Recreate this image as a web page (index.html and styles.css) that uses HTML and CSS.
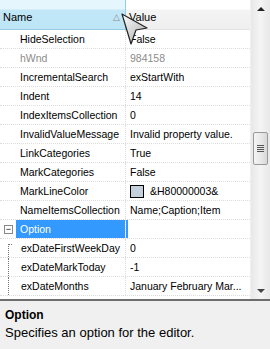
FILE: index.html
```html
<!DOCTYPE html>
<html>
  <head>
    <title>Properties</title>
    <link rel="stylesheet" href="styles.css">
  </head>
  <body>
    <div class="grid">
      <div class="main">
        <div class="list">
          <div class="header">
            <div class="head-name">Name<span class="sort">&#9651;</span></div>
            <div class="head-value">Value</div>
          </div>
          <div class="row"><div class="name">HideSelection</div><div class="value">False</div></div>
          <div class="row disabled"><div class="name">hWnd</div><div class="value">984158</div></div>
          <div class="row"><div class="name">IncrementalSearch</div><div class="value">exStartWith</div></div>
          <div class="row"><div class="name">Indent</div><div class="value">14</div></div>
          <div class="row"><div class="name">IndexItemsCollection</div><div class="value">0</div></div>
          <div class="row"><div class="name">InvalidValueMessage</div><div class="value">Invalid property value.</div></div>
          <div class="row"><div class="name">LinkCategories</div><div class="value">True</div></div>
          <div class="row"><div class="name">MarkCategories</div><div class="value">False</div></div>
          <div class="row"><div class="name">MarkLineColor</div><div class="value"><span class="swatch"></span>&amp;H80000003&amp;</div></div>
          <div class="row"><div class="name">NameItemsCollection</div><div class="value">Name;Caption;Item</div></div>
          <div class="row selected">
            <div class="name"><span class="expander">&minus;</span><span class="label">Option</span></div>
            <div class="value"></div>
          </div>
          <div class="row child first"><div class="name"><span class="tree"></span>exDateFirstWeekDay</div><div class="value">0</div></div>
          <div class="row child"><div class="name"><span class="tree"></span>exDateMarkToday</div><div class="value">-1</div></div>
          <div class="row child"><div class="name"><span class="tree"></span>exDateMonths</div><div class="value">January February Mar...</div></div>
        </div>
        <div class="scrollbar">
          <div class="arrow up"></div>
          <div class="track">
            <div class="thumb"><span class="grip"></span></div>
          </div>
          <div class="arrow down"></div>
        </div>
      </div>
      <div class="desc">
        <div class="desc-title">Option</div>
        <div class="desc-text">Specifies an option for the editor.</div>
      </div>
      <svg class="cursor" width="30" height="34" viewBox="0 0 30 34">
        <defs>
          <linearGradient id="cg" x1="0" y1="0" x2="1" y2="1">
            <stop offset="0" stop-color="#ffffff"/>
            <stop offset="1" stop-color="#a8a8a8"/>
          </linearGradient>
        </defs>
        <polygon points="1,1 26,15 15,17 10,31" fill="url(#cg)" stroke="#222" stroke-width="1.2" stroke-linejoin="round"/>
      </svg>
    </div>
  </body>
</html>
```

FILE: styles.css
```css
body {
  margin: 0;
  font-family: "Liberation Sans", Arial, sans-serif;
  font-size: 10.5px;
  color: #000;
  background: #fff;
}
.grid {
  position: relative;
  width: 270px;
  height: 349px;
  display: flex;
  flex-direction: column;
  overflow: hidden;
}
.main {
  display: flex;
  height: 299px;
  border-bottom: 2px solid #6d6d6d;
}
.list {
  flex: 1;
  overflow: hidden;
}
.header {
  display: flex;
  height: 30px;
  font-size: 11px;
}
.head-name {
  width: 126px;
  padding-left: 3px;
  padding-top: 4px;
  box-sizing: border-box;
  display: flex;
  align-items: center;
  background: linear-gradient(#e6f6fd 0, #e6f6fd 9px, #c2e8f8 10px, #bde5f6 100%);
  border-right: 1px solid #94cbe5;
  border-bottom: 1px solid #94cbe5;
}
.sort {
  margin-left: auto;
  margin-right: 5px;
  color: #8a8a8a;
  font-size: 9px;
}
.head-value {
  flex: 1;
  padding-left: 3px;
  padding-top: 4px;
  display: flex;
  align-items: center;
  background: linear-gradient(#ffffff 0, #ffffff 9px, #f4f4f4 10px, #efefef 100%);
  border-bottom: 1px solid #e2e2e2;
}
.row {
  display: flex;
  height: 19px;
  border-bottom: 1px dotted #dcdcdc;
  box-sizing: border-box;
  line-height: 18px;
}
.name {
  width: 126px;
  padding-left: 20px;
  box-sizing: border-box;
  border-right: 1px dotted #dcdcdc;
  white-space: nowrap;
  overflow: hidden;
  display: flex;
  align-items: center;
}
.value {
  flex: 1;
  padding-left: 4px;
  white-space: nowrap;
  overflow: hidden;
  display: flex;
  align-items: center;
}
.disabled {
  color: #8c8c8c;
}
.swatch {
  display: inline-block;
  width: 14px;
  height: 13px;
  border: 1px solid #000;
  background: #c4d1dd;
  margin-right: 6px;
  box-sizing: border-box;
}
.selected .name {
  padding-left: 4px;
}
.expander {
  width: 9px;
  height: 9px;
  border: 1px solid #888;
  box-sizing: border-box;
  display: flex;
  align-items: center;
  justify-content: center;
  font-size: 9px;
  line-height: 7px;
  margin-right: 3px;
  color: #000;
}
.label {
  flex: 1;
  align-self: stretch;
  background: #3399ff;
  color: #fff;
  padding-left: 4px;
}
.selected .value {
  border-left: 2px solid #3399ff;
  padding-left: 0;
}
.child .name {
  padding-left: 8px;
}
.tree {
  align-self: stretch;
  width: 5px;
  margin-right: 8px;
  border-left: 1px dotted #777;
  box-sizing: border-box;
}
.first .tree {
  margin-top: 5px;
  background: linear-gradient(90deg, #777 50%, transparent 50%) 0 0 / 2px 1px repeat-x;
}
.scrollbar {
  width: 19px;
  display: flex;
  flex-direction: column;
  align-items: center;
  background: linear-gradient(90deg, #e8e8e8, #f4f4f4 50%, #e8e8e8);
  border-left: 1px solid #f0f0f0;
}
.arrow {
  height: 17px;
  width: 100%;
  display: flex;
  align-items: center;
  justify-content: center;
}
.arrow::before {
  content: "";
  border-left: 4px solid transparent;
  border-right: 4px solid transparent;
}
.up::before {
  border-bottom: 4px solid #222;
}
.down::before {
  border-top: 4px solid #444;
}
.track {
  flex: 1;
  width: 100%;
  padding-top: 115px;
  box-sizing: border-box;
}
.thumb {
  margin: 0 auto;
  width: 15px;
  height: 33px;
  box-sizing: border-box;
  border: 1px solid #999;
  border-radius: 2px;
  background: linear-gradient(90deg, #f4f4f4, #e6e6e6 60%, #d8d8d8);
  display: flex;
  align-items: center;
  justify-content: center;
}
.grip {
  width: 7px;
  height: 7px;
  background: linear-gradient(#555 1px, transparent 1px) 0 0 / 7px 2px repeat-y;
}
.desc {
  flex: 1;
  background: #f0f0f0;
  padding: 5px 5px;
  font-size: 13px;
}
.desc-title {
  font-weight: bold;
  font-size: 12px;
  line-height: 18px;
}
.desc-text {
  line-height: 18px;
}
.cursor {
  position: absolute;
  left: 121px;
  top: 13px;
}
```
